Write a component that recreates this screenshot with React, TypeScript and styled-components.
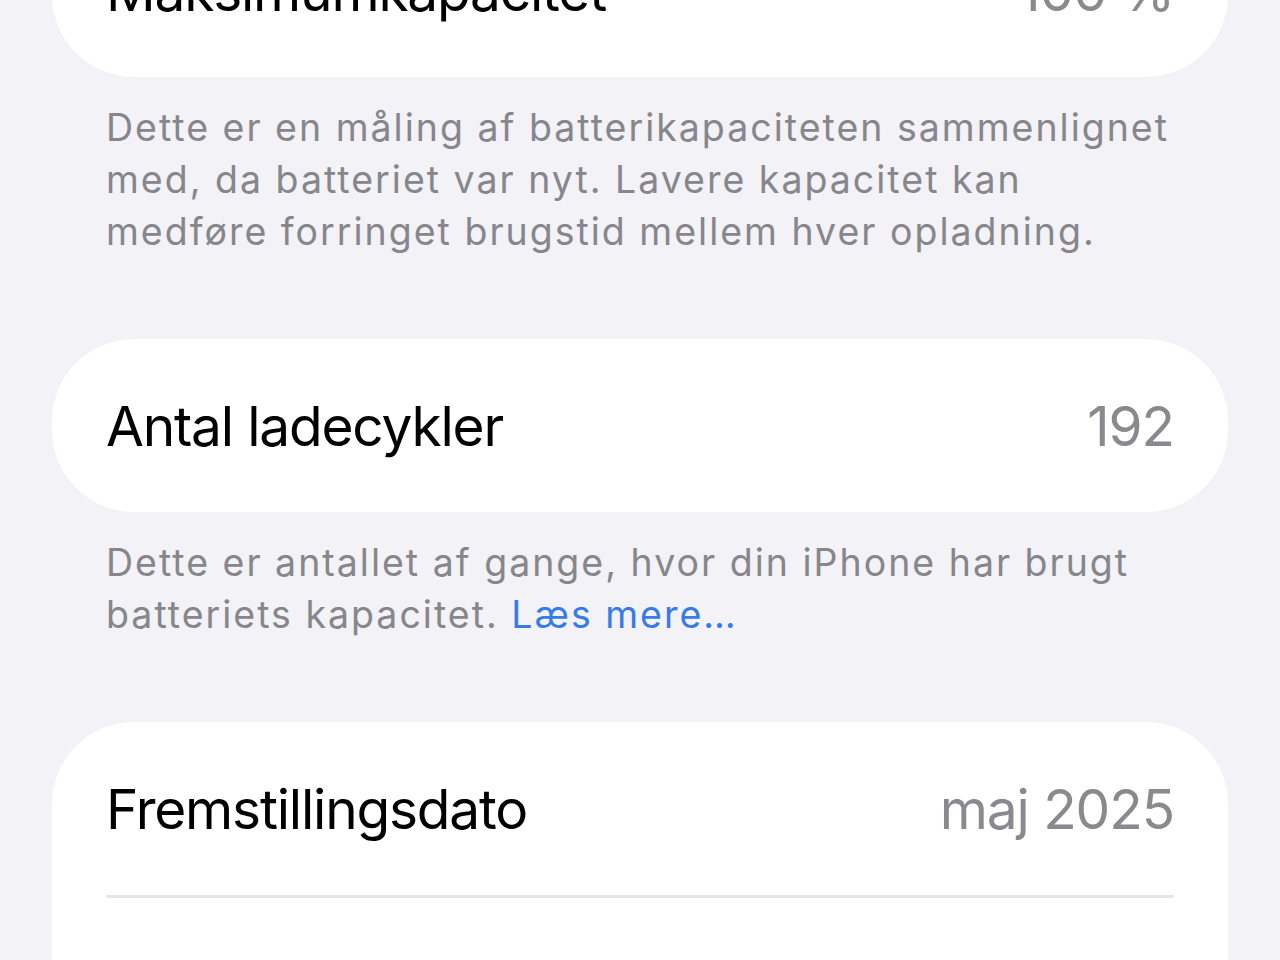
import { ReactNode } from 'react';
import styled, { createGlobalStyle } from 'styled-components';

const GlobalStyle = createGlobalStyle`
  html, body {
    margin: 0;
    padding: 0;
    background: #f2f2f7;
  }

  body {
    font-family: Inter, "Noto Sans", "Liberation Sans", sans-serif;
    -webkit-font-smoothing: antialiased;
  }
`;

const Page = styled.div`
  width: 1280px;
  height: 960px;
  overflow: hidden;

  box-sizing: border-box;
  padding: 0 52px;
`;

const Group = styled.section`
  display: flex;
  flex-direction: column;

  margin-bottom: 81px;

  &:first-child {
    margin-top: -96px;
  }
`;

const Card = styled.div`
  display: flex;
  flex-direction: column;

  padding: 0 54px;

  background: #ffffff;
  border-radius: 82px;
`;

const CellRow = styled.div<{ $divided: boolean }>`
  display: flex;
  align-items: center;
  justify-content: space-between;

  height: 173px;

  border-top: ${({ $divided }) => $divided ? '3px solid #e5e5ea' : 'none'};
`;

const Label = styled.span`
  font-size: 55px;
  letter-spacing: -1.2px;
  color: #000000;
`;

const Value = styled.span`
  font-size: 55px;
  letter-spacing: -1.1px;
  color: #8a8a8e;
`;

const Footer = styled.p`
  margin: 25px 0 0 0;
  padding: 0 54px;

  font-size: 37.5px;
  line-height: 52px;
  letter-spacing: 2px;
  color: #86868b;
`;

const Link = styled.span`
  color: #367be8;
`;

type Row = {
  label: string,
  value: string,
};

type Section = {
  rows: Row[],
  footer?: ReactNode,
};

const sections: Section[] = [
  {
    rows: [{ label: 'Maksimumkapacitet', value: '100 %' }],
    footer: 'Dette er en måling af batterikapaciteten sammenlignet med, da batteriet var nyt. Lavere kapacitet kan medføre forringet brugstid mellem hver opladning.',
  },
  {
    rows: [{ label: 'Antal ladecykler', value: '192' }],
    footer: <>Dette er antallet af gange, hvor din iPhone har brugt batteriets kapacitet. <Link>Læs mere…</Link></>,
  },
  {
    rows: [
      { label: 'Fremstillingsdato', value: 'maj 2025' },
      { label: 'Første brug', value: 'jun. 2025' },
    ],
  },
];

export default function App() {
  return <>
    <GlobalStyle />
    <Page>
      {sections.map((section, idx) => (
        <Group key={idx}>
          <Card>
            {section.rows.map((row, rowIdx) => (
              <CellRow key={rowIdx} $divided={rowIdx > 0}>
                <Label>{row.label}</Label>
                <Value>{row.value}</Value>
              </CellRow>
            ))}
          </Card>
          {section.footer && <Footer>{section.footer}</Footer>}
        </Group>
      ))}
    </Page>
  </>;
}
